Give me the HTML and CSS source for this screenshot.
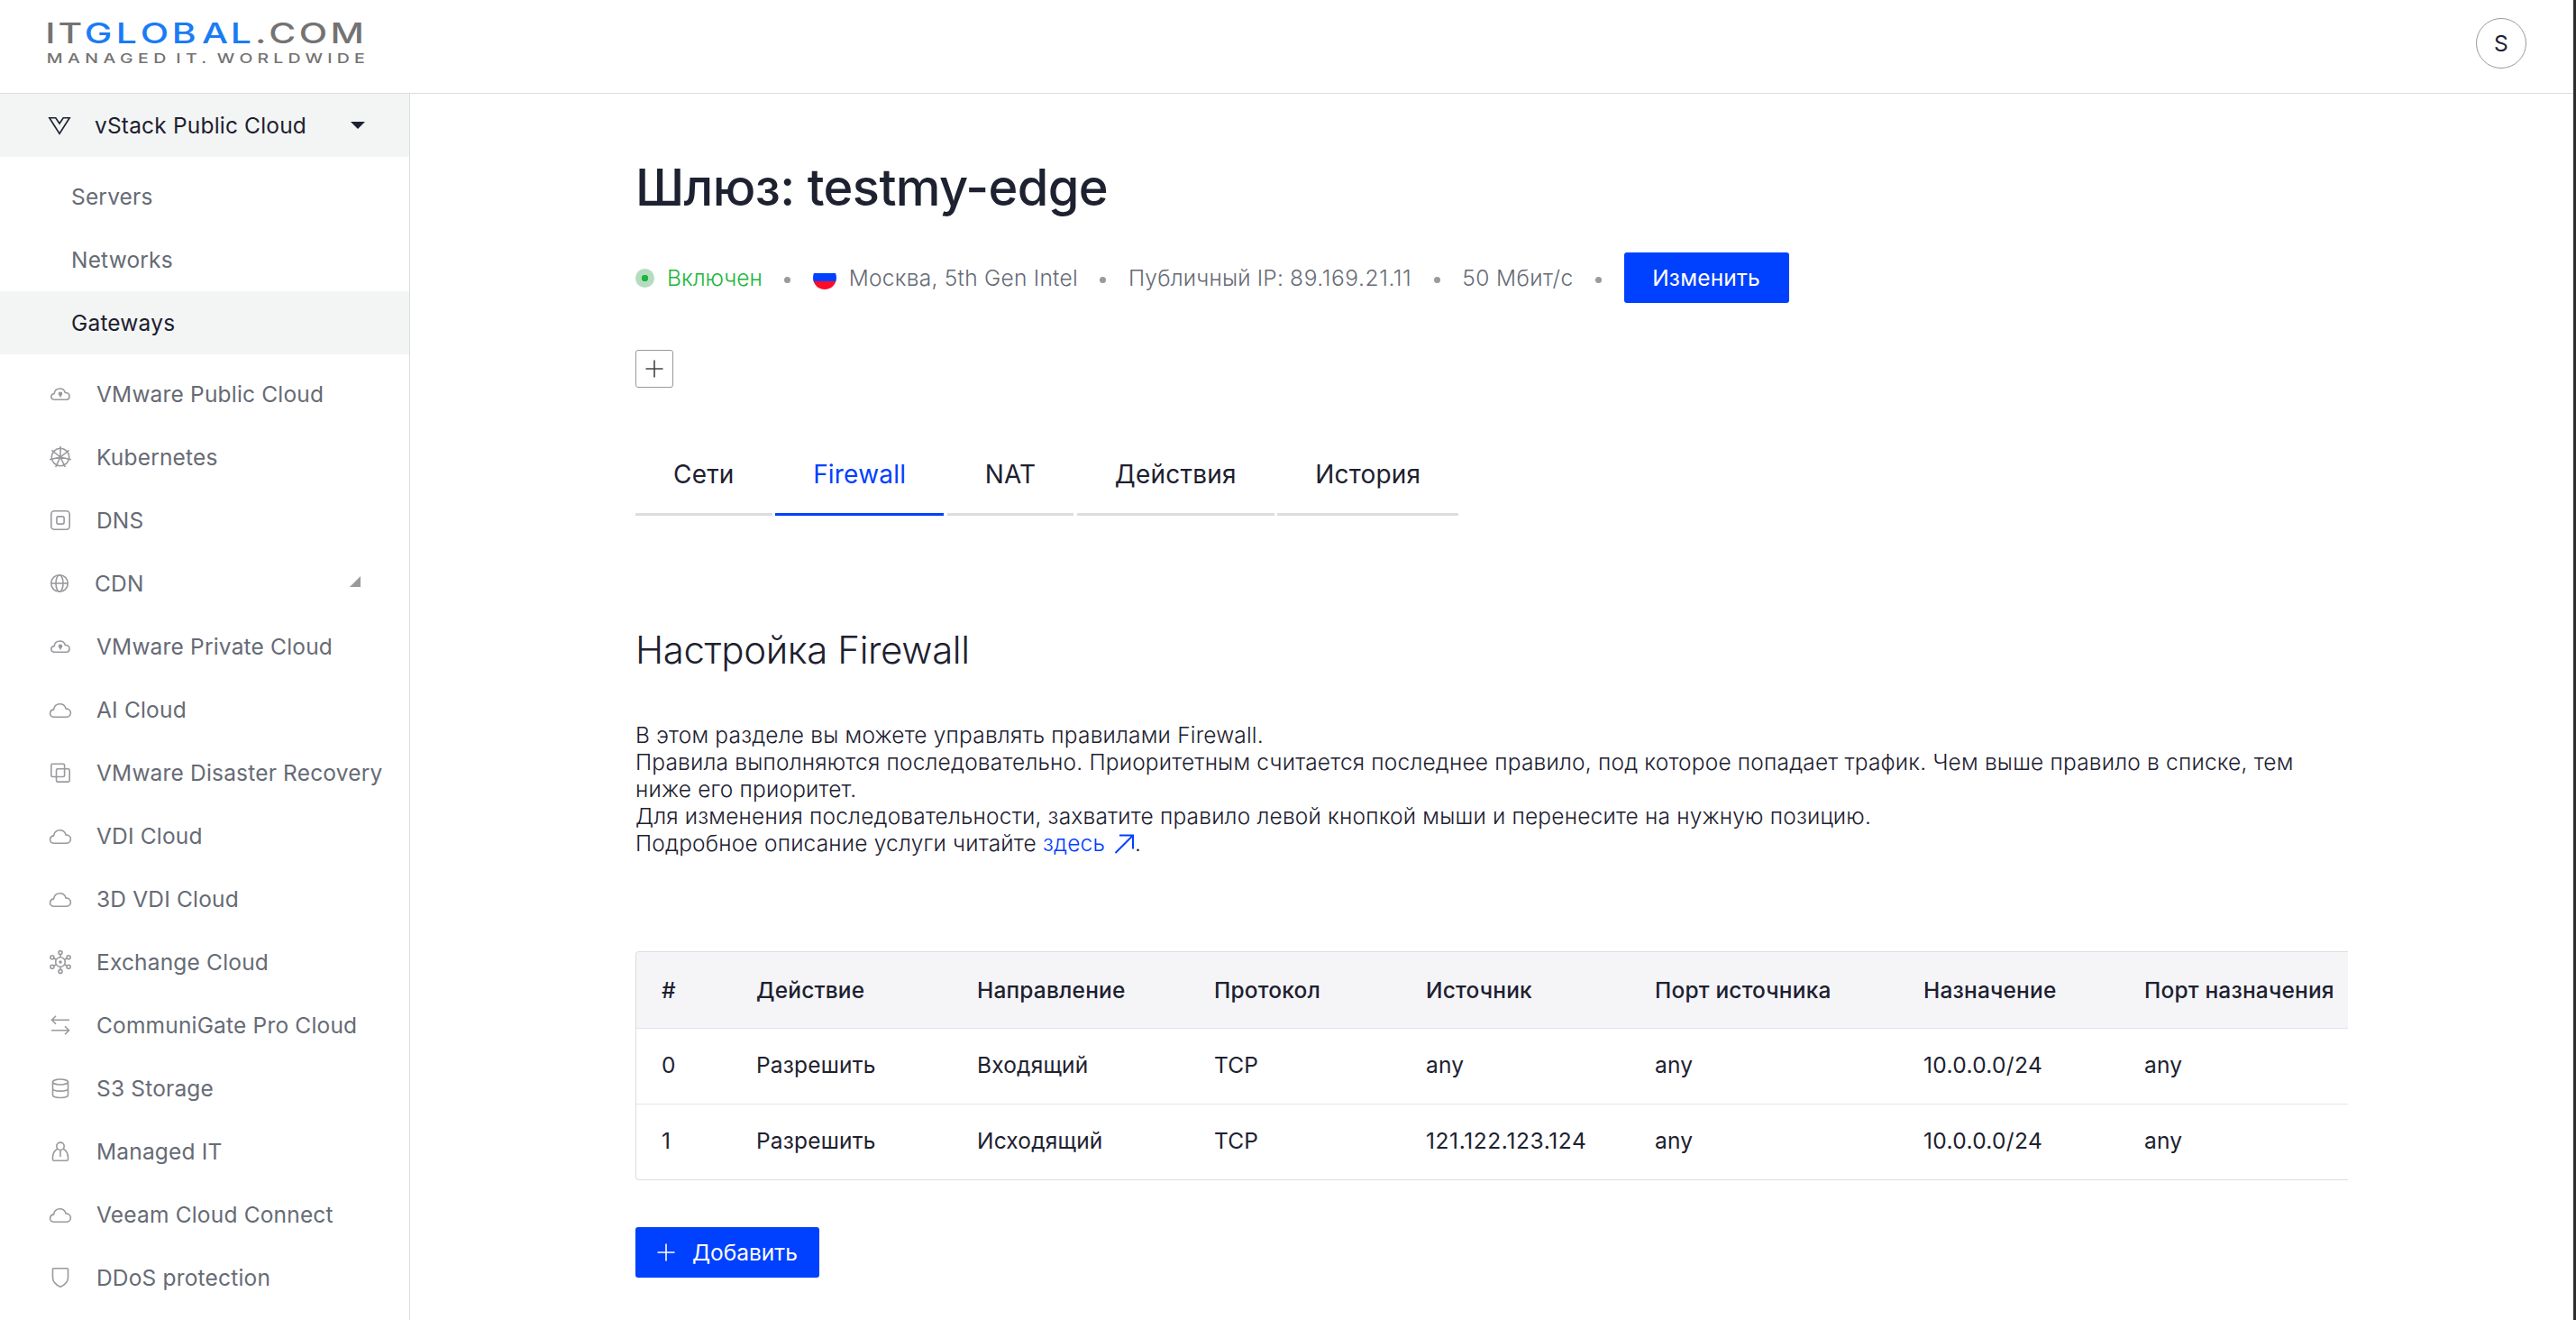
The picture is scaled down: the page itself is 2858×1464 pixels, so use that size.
FILE: index.html
```
<!DOCTYPE html>
<html lang="ru">
<head>
<meta charset="UTF-8">
<meta name="viewport" content="width=device-width, initial-scale=1.0">
<title>Шлюз: testmy-edge</title>
<link rel="stylesheet" href="styles.css">
</head>

<body>

<!-- ICONS -->
<svg class="sprite">
<symbol id="i-cloud" viewBox="0 0 28 28"><path d="M7 22.3c-2.6 0-4.4-1.8-4.4-4.1 0-2.2 1.7-3.9 4-4.3C7.2 10 9.9 7.7 13.4 7.7c3.3 0 5.9 2.2 6.6 5.2 3.1 0 5.4 2 5.4 4.7 0 2.8-2.2 4.7-5 4.7z"/></symbol>
<symbol id="i-cloudkey" viewBox="0 0 28 28"><path d="M7.5 20.3c-2.2 0-3.7-1.4-3.7-3.3 0-1.8 1.3-3.2 3.3-3.5.6-3.300 3-5.500 6.300-5.500 3 0 5.300 1.900 5.900 4.500 2.800 0 4.800 1.600 4.800 3.900 0 2.400-1.900 3.900-4.400 3.900z"/><circle cx="14" cy="13.700" r="1.500" class="fill"/><path d="M14 14v3.600"/></symbol>
<symbol id="i-kube" viewBox="0 0 28 28"><circle cx="14" cy="14" r="9.700"/><path d="M14 14V2M14 14l9.600-7.700M14 14l11.900 2.700M14 14l5.300 11M14 14l-5.300 11M14 14L2.100 16.700M14 14L4.400 6.300"/></symbol>
<symbol id="i-dns" viewBox="0 0 28 28"><rect x="3.800" y="3.800" width="20.400" height="20.400" rx="3.500"/><rect x="9.900" y="9.900" width="8.200" height="8.200" rx="1.800"/></symbol>
<symbol id="i-globe" viewBox="0 0 28 28"><circle cx="14" cy="14" r="9.300"/><ellipse cx="14" cy="14" rx="4" ry="9.300"/><path d="M4.700 14h18.600"/></symbol>
<symbol id="i-copy" viewBox="0 0 28 28"><rect x="3.800" y="4.200" width="14.800" height="14.300" rx="1.500"/><rect x="9.500" y="9.800" width="14.700" height="14.300" rx="1.500"/></symbol>
<symbol id="i-nodes" viewBox="0 0 28 28"><circle cx="14" cy="14" r="5.300"/><circle cx="14" cy="14" r="1" class="fill"/><circle cx="14" cy="3.600" r="2"/><circle cx="14" cy="24.400" r="2"/><circle cx="4.900" cy="8.800" r="2"/><circle cx="23.100" cy="8.800" r="2"/><circle cx="4.900" cy="19.200" r="2"/><circle cx="23.100" cy="19.200" r="2"/><path d="M14 5.600v3.100M14 19.300v3.100M6.700 9.800l2.700 1.500M18.600 16.700l2.700 1.500M21.300 9.800l-2.700 1.500M9.400 16.700l-2.700 1.500"/></symbol>
<symbol id="i-arrows" viewBox="0 0 28 28"><path d="M24 8.300H4.500M9 3.800L4.500 8.300 9 12.800M4 19.700h19.500M19 15.200l4.500 4.500-4.500 4.500"/></symbol>
<symbol id="i-db" viewBox="0 0 28 28"><ellipse cx="14" cy="7" rx="8.500" ry="3"/><path d="M5.500 7v14.500c0 1.700 3.800 3 8.500 3s8.500-1.300 8.500-3V7M5.500 14.300c0 1.700 3.800 2.800 8.500 2.800s8.500-1.100 8.500-2.800"/></symbol>
<symbol id="i-person" viewBox="0 0 28 28"><circle cx="14" cy="8.300" r="4.200"/><path d="M10.800 11.200c-3.200 1.800-5.300 5.500-5.300 9.800v2c0 .800.500 1.300 1.300 1.300h14.400c.8 0 1.300-.5 1.300-1.300v-2c0-4.300-2.100-8-5.300-9.800M14 12.500v7.500"/></symbol>
<symbol id="i-shield" viewBox="0 0 28 28"><path d="M6.500 3.800h15c.6 0 1 .4 1 1V14c0 5-3.500 8-8.500 10.300C9 22 5.500 19 5.500 14V4.800c0-.6.400-1 1-1z"/></symbol>
<symbol id="i-vstack" viewBox="0 0 28 28"><path d="M2.800 5.700h7l4.200 6.300 4.200-6.300h7L14 23.300z"/></symbol>
<symbol id="i-plus" viewBox="0 0 28 28"><path d="M14 4.500v19M4.500 14h19"/></symbol>
</svg>

<!-- HEADER -->
<header class="header">
<svg class="logo" width="352" height="50" viewBox="0 0 352 50">
<g class="logo-main" transform="scale(1.3 1)">
<text x="-2.2 8.8" y="26">IT</text>
<text x="31.3 58.2 79 105.9 131.6 155.9" y="26" class="blue">GLOBAL</text>
<text x="177 188.6 214.4 241.2" y="26">.COM</text>
</g>
<g class="logo-sub" transform="scale(1.3 1)">
<text x="-1" y="48" textLength="102">MANAGED</text>
<text x="109.500" y="48" textLength="26">IT.</text>
<text x="144.500" y="48" textLength="126">WORLDWIDE</text>
</g>
</svg>
<div class="avatar">S</div>
</header>

<div class="layout">

<!-- SIDEBAR -->
<nav class="sidebar">
<a class="item parent active"><svg class="icon"><use href="#i-vstack"/></svg>vStack Public Cloud<span class="caret"></span></a>
<div class="submenu">
<a class="subitem">Servers</a>
<a class="subitem">Networks</a>
<a class="subitem active">Gateways</a>
</div>
<a class="item"><svg class="icon"><use href="#i-cloudkey"/></svg>VMware Public Cloud</a>
<a class="item"><svg class="icon"><use href="#i-kube"/></svg>Kubernetes</a>
<a class="item"><svg class="icon"><use href="#i-dns"/></svg>DNS</a>
<a class="item parent"><svg class="icon"><use href="#i-globe"/></svg>CDN<span class="corner"></span></a>
<a class="item"><svg class="icon"><use href="#i-cloudkey"/></svg>VMware Private Cloud</a>
<a class="item"><svg class="icon"><use href="#i-cloud"/></svg>AI Cloud</a>
<a class="item"><svg class="icon"><use href="#i-copy"/></svg>VMware Disaster Recovery</a>
<a class="item"><svg class="icon"><use href="#i-cloud"/></svg>VDI Cloud</a>
<a class="item"><svg class="icon"><use href="#i-cloud"/></svg>3D VDI Cloud</a>
<a class="item"><svg class="icon"><use href="#i-nodes"/></svg>Exchange Cloud</a>
<a class="item"><svg class="icon"><use href="#i-arrows"/></svg>CommuniGate Pro Cloud</a>
<a class="item"><svg class="icon"><use href="#i-db"/></svg>S3 Storage</a>
<a class="item"><svg class="icon"><use href="#i-person"/></svg>Managed IT</a>
<a class="item"><svg class="icon"><use href="#i-cloud"/></svg>Veeam Cloud Connect</a>
<a class="item"><svg class="icon"><use href="#i-shield"/></svg>DDoS protection</a>
</nav>

<!-- CONTENT -->
<main class="content">
<h1>Шлюз: testmy-edge</h1>

<div class="status">
<span class="state"><i class="lamp"></i>Включен</span>
<i class="dot"></i>
<span class="place"><svg class="flag" width="26" height="26" viewBox="0 0 26 26"><clipPath id="round"><circle cx="13" cy="13" r="13"/></clipPath><g clip-path="url(#round)"><path fill="#fff" d="M0 0h26v8H0z"/><path fill="#0040ff" d="M0 8h26v9H0z"/><path fill="#ff0a28" d="M0 17h26v9H0z"/></g></svg>Москва, 5th Gen Intel</span>
<i class="dot"></i>
<span>Публичный IP: <span class="ip">89.169.21.11</span></span>
<i class="dot"></i>
<span class="speed">50 Мбит/с</span>
<i class="dot"></i>
<button class="btn">Изменить</button>
</div>

<button class="add-tag"><svg width="28" height="28"><use href="#i-plus"/></svg></button>

<div class="tabs">
<a class="tab">Сети</a>
<a class="tab current">Firewall</a>
<a class="tab">NAT</a>
<a class="tab">Действия</a>
<a class="tab">История</a>
</div>

<h2>Настройка Firewall</h2>

<p class="about">В этом разделе вы можете управлять правилами Firewall.<br>
Правила выполняются последовательно. Приоритетным считается последнее правило, под которое попадает трафик. Чем выше правило в списке, тем ниже его приоритет.<br>
Для изменения последовательности, захватите правило левой кнопкой мыши и перенесите на нужную позицию.<br>
Подробное описание услуги читайте <a class="link">здесь <svg width="24" height="24" viewBox="0 0 24 24"><path d="M2.500 22L21.500 3M7 2.500h15v15"/></svg></a>.</p>

<table class="rules">
<colgroup><col class="c1"><col class="c2"><col class="c3"><col class="c4"><col class="c5"><col class="c6"><col class="c7"><col></colgroup>
<thead>
<tr><th>#</th><th>Действие</th><th>Направление</th><th>Протокол</th><th>Источник</th><th>Порт источника</th><th>Назначение</th><th>Порт назначения</th></tr>
</thead>
<tbody>
<tr><td>0</td><td>Разрешить</td><td>Входящий</td><td>TCP</td><td>any</td><td>any</td><td class="net">10.0.0.0/24</td><td>any</td></tr>
<tr><td>1</td><td>Разрешить</td><td>Исходящий</td><td>TCP</td><td class="ip">121.122.123.124</td><td>any</td><td class="net">10.0.0.0/24</td><td>any</td></tr>
</tbody>
</table>

<button class="btn btn-add"><svg width="28" height="28"><use href="#i-plus"/></svg>Добавить</button>
</main>

</div>

</body>
</html>
```
FILE: styles.css
```
*{box-sizing:border-box;}

body{
margin:0;
height:1464px;
overflow:hidden;
border-right:3px solid #2b2d2e;
font-family:Inter,"Liberation Sans",sans-serif;
font-size:24.5px;
letter-spacing:.18px;
color:#1d2130;
background:#fff;
}

.sprite{display:none;}

/* HEADER */
.header{
height:104px;
padding:0 52px 8px 53px;
border-bottom:1px solid #ddd;
display:flex;
justify-content:space-between;
align-items:center;
}
.logo{
margin-top:-1px;
overflow:visible;
fill:#737373;
letter-spacing:0;
}
.logo-main{font-size:31.5px;font-weight:500;}
.logo-sub{font-size:15px;font-weight:500;}
.blue{fill:#1a7cf5;}
.avatar{
width:56px;
height:56px;
border:1px solid #999;
border-radius:50%;
display:flex;
align-items:center;
justify-content:center;
}

.layout{
display:flex;
height:1360px;
}

/* SIDEBAR */
.sidebar{
width:455px;
flex:none;
border-right:1px solid #ddd;
color:#666b75;
}
.item{
height:70px;
padding:0 49px 0 53px;
display:flex;
align-items:center;
white-space:nowrap;
}
.icon{
width:28px;
height:28px;
margin-right:26px;
flex:none;
}
.parent{padding-left:52px;}
.parent .icon{margin-right:25px;}
svg{
fill:none;
stroke:currentColor;
stroke-width:1.6;
}
.icon{color:#999a9e;}
.fill{fill:currentColor;}
.logo,.flag{stroke:none;}
.submenu{padding:9px 0;}
.subitem{
height:70px;
padding-left:79px;
display:flex;
align-items:center;
}
.active,.active .icon{color:#1d2130;}
.active{background:#f3f5f4;}
.caret{
margin-left:auto;
border:8px solid transparent;
border-top-color:#1d2130;
border-bottom:0;
}
.corner{
width:12px;
height:12px;
margin:-4px 5px 0 auto;
background:#999a9e;
clip-path:polygon(100% 0,100% 100%,0 100%);
}

/* CONTENT */
.content{
width:2150px;
padding:70px 0 0 250px;
}
h1{
margin:0;
font-size:56px;
line-height:68px;
font-weight:500;
letter-spacing:-.65px;
}
.status{
height:56px;
margin-top:38px;
display:flex;
align-items:center;
gap:24.5px;
font-weight:300;
color:#666b75;
white-space:nowrap;
}
.state,.place{
display:flex;
align-items:center;
}
.state{
color:#1db53b;
letter-spacing:0;
}
.place{letter-spacing:.26px;}
.speed{letter-spacing:.4px;}
.lamp{
width:21px;
height:21px;
margin-right:14px;
border-radius:50%;
background:radial-gradient(circle,#1db53b 3.5px,#b5dcbf 4px);
}
.dot{
width:7px;
height:7px;
margin-top:4px;
border-radius:50%;
background:#999a9e;
}
.flag{margin-right:14px;}
button{
font:inherit;
letter-spacing:inherit;
border:0;
padding:0;
}
.btn{
height:56px;
width:183px;
border-radius:3px;
background:#0040ff;
color:#fff;
}
.status .btn{font-weight:400;}
.add-tag{
width:42px;
height:42px;
margin-top:52px;
border:1px solid #999;
border-radius:3px;
background:#fff;
color:#444;
display:flex;
align-items:center;
justify-content:center;
}
.add-tag svg{flex:none;}

/* TABS */
.tabs{
margin-top:51px;
display:flex;
gap:3.5px;
}
.tab{
height:91px;
padding:0 42px 3px;
border-bottom:3px solid #ddd;
font-size:28px;
line-height:90px;
letter-spacing:.2px;
}
.current{
color:#0040ff;
border-color:#0040ff;
}

h2{
margin:124px 0 0;
font-size:42px;
line-height:50px;
font-weight:300;
letter-spacing:-.38px;
}
.about{
width:1890px;
margin:54px 0 0;
font-weight:300;
line-height:30px;
}
.link{color:#0040ff;}
.link svg{
margin:-6px 0 -2px 2px;
vertical-align:-2px;
stroke-width:2;
}

/* TABLE */
.rules{
width:1900px;
margin-top:105px;
table-layout:fixed;
border-collapse:separate;
border-spacing:0;
border:1px solid #ddd;
border-right:0;
border-radius:4px 0 0 4px;
overflow:hidden;
}
.rules th,.rules td{
height:84px;
padding:0 0 3px 28px;
text-align:left;
white-space:nowrap;
border-bottom:1px solid #dfe5f0;
}
.rules th{
height:85px;
padding-bottom:0;
background:#f5f5f8;
font-weight:500;
}
.rules tr:last-child td{
height:83px;
border-bottom:0;
}
.rules th:nth-child(n+5),.rules td:nth-child(n+5){padding-left:27px;}
.rules tr:last-child th{border-bottom:1px solid #dfe5f0;}
.c1{width:105px;}
.c2{width:245px;}
.c3{width:263px;}
.c4{width:236px;}
.c5{width:254px;}
.c6{width:298px;}
.c7{width:245px;}
.ip{letter-spacing:.6px;}
.net{letter-spacing:.33px;}

.btn-add{
width:204px;
margin-top:52px;
padding-left:20px;
display:flex;
align-items:center;
gap:15px;
letter-spacing:0;
}
```
